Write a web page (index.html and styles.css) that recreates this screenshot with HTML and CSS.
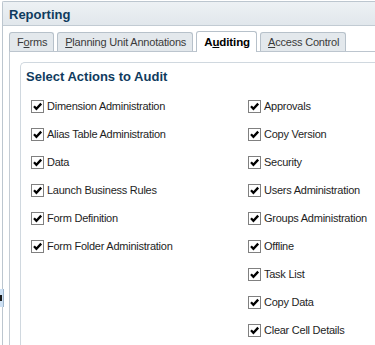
FILE: index.html
```html
<!DOCTYPE html>
<html>
<head>
<meta charset="utf-8">
<link rel="stylesheet" href="styles.css">
</head>
<body>
<div class="frame">
  <div class="header"><span class="title">Reporting</span></div>
  <div class="tabs">
    <div class="tab">F<u>o</u>rms</div>
    <div class="tab"><u>P</u>lanning Unit Annotations</div>
    <div class="tab active">A<u>u</u>diting</div>
    <div class="tab"><u>A</u>ccess Control</div>
  </div>
  <div class="panel">
    <div class="group">
      <div class="legend">Select Actions to Audit</div>
      <div class="cols">
        <div class="col left">
          <div class="item"><svg class="cb" viewBox="0 0 13 13"><rect x="0.5" y="0.5" width="12" height="12" fill="#fff" stroke="#808080"/><path d="M3 6.3 L5.4 8.8 L10.2 3.6" fill="none" stroke="#000" stroke-width="2.3"/></svg><span>Dimension Administration</span></div>
          <div class="item"><svg class="cb" viewBox="0 0 13 13"><rect x="0.5" y="0.5" width="12" height="12" fill="#fff" stroke="#808080"/><path d="M3 6.3 L5.4 8.8 L10.2 3.6" fill="none" stroke="#000" stroke-width="2.3"/></svg><span>Alias Table Administration</span></div>
          <div class="item"><svg class="cb" viewBox="0 0 13 13"><rect x="0.5" y="0.5" width="12" height="12" fill="#fff" stroke="#808080"/><path d="M3 6.3 L5.4 8.8 L10.2 3.6" fill="none" stroke="#000" stroke-width="2.3"/></svg><span>Data</span></div>
          <div class="item"><svg class="cb" viewBox="0 0 13 13"><rect x="0.5" y="0.5" width="12" height="12" fill="#fff" stroke="#808080"/><path d="M3 6.3 L5.4 8.8 L10.2 3.6" fill="none" stroke="#000" stroke-width="2.3"/></svg><span>Launch Business Rules</span></div>
          <div class="item"><svg class="cb" viewBox="0 0 13 13"><rect x="0.5" y="0.5" width="12" height="12" fill="#fff" stroke="#808080"/><path d="M3 6.3 L5.4 8.8 L10.2 3.6" fill="none" stroke="#000" stroke-width="2.3"/></svg><span>Form Definition</span></div>
          <div class="item"><svg class="cb" viewBox="0 0 13 13"><rect x="0.5" y="0.5" width="12" height="12" fill="#fff" stroke="#808080"/><path d="M3 6.3 L5.4 8.8 L10.2 3.6" fill="none" stroke="#000" stroke-width="2.3"/></svg><span>Form Folder Administration</span></div>
        </div>
        <div class="col right">
          <div class="item"><svg class="cb" viewBox="0 0 13 13"><rect x="0.5" y="0.5" width="12" height="12" fill="#fff" stroke="#808080"/><path d="M3 6.3 L5.4 8.8 L10.2 3.6" fill="none" stroke="#000" stroke-width="2.3"/></svg><span>Approvals</span></div>
          <div class="item"><svg class="cb" viewBox="0 0 13 13"><rect x="0.5" y="0.5" width="12" height="12" fill="#fff" stroke="#808080"/><path d="M3 6.3 L5.4 8.8 L10.2 3.6" fill="none" stroke="#000" stroke-width="2.3"/></svg><span>Copy Version</span></div>
          <div class="item"><svg class="cb" viewBox="0 0 13 13"><rect x="0.5" y="0.5" width="12" height="12" fill="#fff" stroke="#808080"/><path d="M3 6.3 L5.4 8.8 L10.2 3.6" fill="none" stroke="#000" stroke-width="2.3"/></svg><span>Security</span></div>
          <div class="item"><svg class="cb" viewBox="0 0 13 13"><rect x="0.5" y="0.5" width="12" height="12" fill="#fff" stroke="#808080"/><path d="M3 6.3 L5.4 8.8 L10.2 3.6" fill="none" stroke="#000" stroke-width="2.3"/></svg><span>Users Administration</span></div>
          <div class="item"><svg class="cb" viewBox="0 0 13 13"><rect x="0.5" y="0.5" width="12" height="12" fill="#fff" stroke="#808080"/><path d="M3 6.3 L5.4 8.8 L10.2 3.6" fill="none" stroke="#000" stroke-width="2.3"/></svg><span>Groups Administration</span></div>
          <div class="item"><svg class="cb" viewBox="0 0 13 13"><rect x="0.5" y="0.5" width="12" height="12" fill="#fff" stroke="#808080"/><path d="M3 6.3 L5.4 8.8 L10.2 3.6" fill="none" stroke="#000" stroke-width="2.3"/></svg><span>Offline</span></div>
          <div class="item"><svg class="cb" viewBox="0 0 13 13"><rect x="0.5" y="0.5" width="12" height="12" fill="#fff" stroke="#808080"/><path d="M3 6.3 L5.4 8.8 L10.2 3.6" fill="none" stroke="#000" stroke-width="2.3"/></svg><span>Task List</span></div>
          <div class="item"><svg class="cb" viewBox="0 0 13 13"><rect x="0.5" y="0.5" width="12" height="12" fill="#fff" stroke="#808080"/><path d="M3 6.3 L5.4 8.8 L10.2 3.6" fill="none" stroke="#000" stroke-width="2.3"/></svg><span>Copy Data</span></div>
          <div class="item"><svg class="cb" viewBox="0 0 13 13"><rect x="0.5" y="0.5" width="12" height="12" fill="#fff" stroke="#808080"/><path d="M3 6.3 L5.4 8.8 L10.2 3.6" fill="none" stroke="#000" stroke-width="2.3"/></svg><span>Clear Cell Details</span></div>
        </div>
      </div>
    </div>
  </div>
</div>
<div class="handle"><div class="grip"></div></div>
</body>
</html>
```

FILE: styles.css
```css
html, body {
  margin: 0;
  padding: 0;
  background: #fff;
}
body {
  width: 375px;
  height: 345px;
  overflow: hidden;
  position: relative;
  font-family: "Liberation Sans", Arial, sans-serif;
}
.frame {
  margin: 1px 0 0 2px;
  height: 344px;
  box-sizing: border-box;
  border-left: 1px solid #bcc6cf;
  border-top: 1px solid #bcc6cf;
  border-top-left-radius: 2px;
  display: flex;
  flex-direction: column;
}
.header {
  height: 23px;
  line-height: 23px;
  padding-left: 6px;
  background: linear-gradient(#edf1f4, #e1e7ec);
  border-bottom: 1px solid #c2cbd3;
  flex: none;
}
.title {
  font-size: 13px;
  font-weight: bold;
  color: #0f3b5e;
}
.tabs {
  display: flex;
  align-items: flex-end;
  gap: 3px;
  margin-top: 5px;
  padding-left: 6px;
  flex: none;
}
.tab {
  height: 18px;
  line-height: 19px;
  padding: 0 6px 0 7px;
  font-size: 11px;
  letter-spacing: -0.2px;
  color: #3a3a3a;
  background: #e3e8ec;
  border: 1px solid #b7c1ca;
  border-bottom: none;
  border-radius: 3px 3px 0 0;
}
.tab u {
  text-decoration-thickness: 1px;
  text-underline-offset: 1px;
}
.tab.active {
  height: 20px;
  line-height: 21px;
  margin-bottom: -1px;
  background: #fff;
  color: #000;
  font-weight: bold;
  font-size: 11.5px;
  letter-spacing: -0.1px;
  position: relative;
  z-index: 1;
}
.panel {
  flex: 1;
  margin-left: 6px;
  border-top: 1px solid #bcc5ce;
  border-left: 1px solid #c4ccd4;
  padding: 10px 0 0 10px;
  display: flex;
  flex-direction: column;
}
.group {
  flex: 1;
  border: 1px solid #d0d8df;
  border-right: none;
  border-bottom: none;
  border-top-left-radius: 5px;
  padding: 6px 0 0 10px;
}
.legend {
  margin-left: -5px;
  font-size: 13px;
  line-height: 16px;
  font-weight: bold;
  color: #0f3b5e;
}
.cols {
  display: flex;
  margin-top: 7px;
}
.col.left {
  width: 217px;
}
.item {
  height: 28px;
  display: flex;
  align-items: center;
  font-size: 11px;
  letter-spacing: -0.25px;
  color: #1e1e1e;
  white-space: nowrap;
}
.cb {
  width: 13px;
  height: 13px;
  margin-right: 3px;
  flex: none;
}
.handle {
  position: absolute;
  left: 0;
  top: 289px;
  width: 3px;
  height: 18px;
  background: #cde0f3;
  border-right: 1px solid #9fb6cc;
}
.grip {
  margin-top: 6px;
  width: 2px;
  height: 6px;
  background: #1a1a1a;
}
```
